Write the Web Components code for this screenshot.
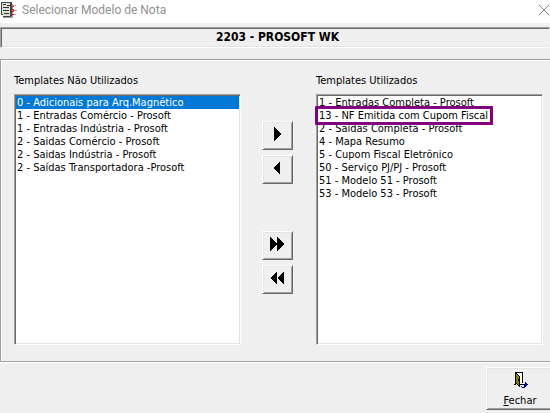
<!DOCTYPE html>
<html lang="pt-BR">
<head>
<meta charset="utf-8">
<meta name="viewport" content="width=device-width, initial-scale=1">
<title>Selecionar Modelo de Nota</title>
<style>
    body {
        margin: 0;
        background: #efefef;
        overflow: hidden;
    }
</style>
</head>
<body>
<model-dialog></model-dialog>

<script>
class TitleBar extends HTMLElement {
    constructor() {
        super();
        this.attachShadow({ mode: 'open' });
    }

    connectedCallback() {
        this.shadowRoot.innerHTML = `
            <style>
                :host {
                    display: flex;
                    align-items: center;
                    gap: 5px;
                    height: 23px;
                    padding-left: 1px;
                    background: #fff;
                    color: #909090;
                    font: 12px/20px Roboto, "Noto Sans", sans-serif;
                }

                .icon {
                    flex: none;
                    align-self: flex-start;
                    margin-top: 2px;
                }

                .title {
                    flex: 1;
                    align-self: flex-start;
                    white-space: nowrap;
                }

                button {
                    align-self: flex-start;
                    display: flex;
                    margin: 5px 1px 0 0;
                    padding: 0;
                    border: 0;
                    background: none;
                    color: inherit;
                }
            </style>

            <svg class="icon" width="16" height="16" viewBox="0 0 16 16" shape-rendering="crispEdges" aria-hidden="true">
                <path fill="#999" d="M2 14h10v2H2zM10 2h2v13h-2z"/>
                <path fill="#444" d="M0 0h10v1H0zM0 0h1v13H0zM9 0h2v14H9zM0 12h2v1H0zM2 14h8v1H2z"/>
                <path fill="#ddd" d="M1 1h8v13H2V12H1z"/>
                <path fill="#333" d="M2 2h3v1H2zM6 3h3v1H6zM2 5h6v1H2zM2 8h2v1H2zM4 8h4v1H4zM3 11h5v1H3z"/>
                <path fill="#eee84c" d="M4 3h2v1H4zM2 12h2v1H2zM6 9h2v1H6z"/>
                <path fill="#ff8a80" d="M12 3h3v1h-3zM12 8h4v1h-4zM12 12h3v1h-3z"/>
                <path fill="#e53935" d="M11 4h2v1h-2zM11 7h2v3h-2zM11 12h2v1h-2z"/>
            </svg>
            <span class="title"><slot></slot></span>
            <button type="button" aria-label="Fechar janela">
                <svg width="10" height="10" viewBox="0 0 10 10" aria-hidden="true">
                    <path d="M0 0l10 10M10 0L0 10" fill="none" stroke="#888"/>
                </svg>
            </button>
        `;
    }
}

class TemplateList extends HTMLElement {
    constructor() {
        super();
        this.attachShadow({ mode: 'open' });
    }

    connectedCallback() {
        const items = [...this.querySelectorAll('li')];
        const options = items
            .map(li => `<option${li.hasAttribute('selected') ? ' selected' : ''}>${li.textContent}</option>`)
            .join('');

        this.shadowRoot.innerHTML = `
            <style>
                :host {
                    display: block;
                    min-width: 0;
                }

                label {
                    display: block;
                    margin-bottom: 6px;
                    line-height: 14px;
                    white-space: nowrap;
                }

                .box {
                    position: relative;
                }

                select {
                    display: block;
                    box-sizing: border-box;
                    width: 100%;
                    margin: 0;
                    padding: 1px;
                    border: 1px solid;
                    border-color: #a0a0a0 #fff #fff #a0a0a0;
                    border-radius: 0;
                    outline: 0;
                    background: #fff;
                    box-shadow: inset 1px 1px #696969, inset -1px -1px #e3e3e3;
                    color: #000;
                    font: inherit;
                    overflow: hidden;
                    scrollbar-width: none;
                }

                option {
                    min-height: 13px;
                    height: 13px;
                    padding: 0 1px;
                    line-height: 13px;
                    white-space: pre;
                }

                option:checked {
                    background: #0078d7 linear-gradient(#0078d7, #0078d7);
                    color: #fff;
                    -webkit-text-fill-color: #fff;
                }

                ::slotted([slot="mark"]) {
                    position: absolute;
                    top: 12px;
                    left: -1px;
                    box-sizing: border-box;
                    width: 178px;
                    height: 19px;
                    border: 3px solid #800080;
                    border-radius: 1px;
                    pointer-events: none;
                }
            </style>

            <label for="list">${this.getAttribute('label')}</label>
            <div class="box">
                <select id="list" size="19">${options}</select>
                <slot name="mark"></slot>
            </div>
        `;
    }
}

class MoveButton extends HTMLElement {
    constructor() {
        super();
        this.attachShadow({ mode: 'open' });
    }

    connectedCallback() {
        const shapes = {
            right: 'M11 5v14l7-7z',
            left: 'M17 5v14l-7-7z',
            'all-right': 'M7 5v14l7-7zM14 5v14l7-7z',
            'all-left': 'M14 5v14l-7-7zM21 5v14l-7-7z'
        };

        this.shadowRoot.innerHTML = `
            <style>
                :host {
                    display: block;
                }

                button {
                    display: block;
                    box-sizing: border-box;
                    width: 31px;
                    height: 29px;
                    margin: 0;
                    padding: 0;
                    border: 1px solid;
                    border-color: #fff #696969 #696969 #fff;
                    border-radius: 0;
                    background: #efefef;
                    box-shadow: inset 1px 1px #e3e3e3, inset -1px -1px #a0a0a0;
                }

                svg {
                    display: block;
                }
            </style>

            <button type="button" aria-label="${this.getAttribute('label')}">
                <svg width="29" height="27" viewBox="0 0 29 27" shape-rendering="crispEdges" aria-hidden="true">
                    <path d="${shapes[this.getAttribute('direction')]}"/>
                </svg>
            </button>
        `;
    }
}

class CloseButton extends HTMLElement {
    constructor() {
        super();
        this.attachShadow({ mode: 'open' });
    }

    connectedCallback() {
        this.shadowRoot.innerHTML = `
            <style>
                :host {
                    display: block;
                }

                button {
                    display: flex;
                    flex-direction: column;
                    align-items: center;
                    gap: 4px;
                    box-sizing: border-box;
                    width: 68px;
                    height: 43px;
                    margin: 0;
                    padding: 4px 0 0;
                    border: 1px solid;
                    border-color: #fff #696969 #696969 #fff;
                    border-radius: 0;
                    background: #efefef;
                    box-shadow: inset 1px 1px #e3e3e3, inset -1px -1px #a0a0a0;
                    color: #000;
                    font: inherit;
                    line-height: 15px;
                }
            </style>

            <button type="button">
                <svg width="16" height="17" viewBox="0 0 16 17" shape-rendering="crispEdges" aria-hidden="true">
                    <path fill="#000" d="M3 0h8v11h-1V1H4v11H3zM2 12h2v1H2zM8 12h4v1H8z"/>
                    <path fill="#fff" d="M5 1h5v11H8V4H7V3H6V2H5z"/>
                    <path fill="#000" d="M4 1h1v1h1v1h1v1h1v11H7v-1H6v-1H5v-1H4z"/>
                    <path fill="#808000" d="M4 2h1v1h1v1h1v9H6v-1H5v-1H4z"/>
                    <path fill="#000" d="M6 7h1v2H6z"/>
                    <path fill="#000080" d="M13 10h1v1h1v1h1v1h-1v1h-1v1h-1v1h-3v-1h2v-2h-1v-1h2zM9 14h1v1H9z"/>
                </svg>
                <span><slot></slot></span>
            </button>
        `;
    }
}

class ModelDialog extends HTMLElement {
    constructor() {
        super();
        this.attachShadow({ mode: 'open' });
    }

    connectedCallback() {
        this.shadowRoot.innerHTML = `
            <style>
                :host {
                    display: block;
                    color: #000;
                    font: 11px/13px "DejaVu Sans Condensed", "DejaVu Sans", sans-serif;
                }

                h1 {
                    margin: 4px 0 0;
                    padding-left: 5px;
                    border: 1px solid;
                    border-color: #a0a0a0 transparent #fff #a0a0a0;
                    box-shadow: inset 1px 1px #696969, inset 0 -1px #e3e3e3;
                    font-size: 12px;
                    line-height: 19px;
                    text-align: center;
                }

                .panel {
                    display: grid;
                    grid-template-columns: 1fr 75px 1fr;
                    margin-top: 11px;
                    padding: 14px 7px 16px 13px;
                    border: 1px solid #a0a0a0;
                    border-right: 0;
                    box-shadow: inset 1px 1px #fff, 0 1px #fff;
                }

                .moves {
                    display: grid;
                    align-content: start;
                    justify-content: start;
                    gap: 5px;
                    padding: 47px 0 0 21px;
                }

                .all {
                    margin-top: 42px;
                }

                footer {
                    display: flex;
                    justify-content: flex-end;
                    margin: 5px -4px 0 0;
                }
            </style>

            <title-bar>Selecionar Modelo de Nota</title-bar>
            <h1>2203 - PROSOFT WK</h1>
            <div class="panel">
                <template-list label="Templates Não Utilizados">
                    <li selected>0 - Adicionais para Arq.Magnético</li>
                    <li>1 - Entradas Comércio - Prosoft</li>
                    <li>1 - Entradas Indústria - Prosoft</li>
                    <li>2 - Saidas Comércio - Prosoft</li>
                    <li>2 - Saidas Indústria - Prosoft</li>
                    <li>2 - Saídas Transportadora -Prosoft</li>
                </template-list>
                <div class="moves">
                    <move-button direction="right" label="Adicionar"></move-button>
                    <move-button direction="left" label="Remover"></move-button>
                    <move-button class="all" direction="all-right" label="Adicionar todos"></move-button>
                    <move-button direction="all-left" label="Remover todos"></move-button>
                </div>
                <template-list label="Templates Utilizados">
                    <li>1 - Entradas Completa - Prosoft</li>
                    <li>13 - NF Emitida com Cupom Fiscal</li>
                    <li>2 - Saidas Completa - Prosoft</li>
                    <li>4 - Mapa Resumo</li>
                    <li>5 - Cupom Fiscal Eletrônico</li>
                    <li>50 - Serviço PJ/PJ - Prosoft</li>
                    <li>51 - Modelo 51 - Prosoft</li>
                    <li>53 - Modelo 53 - Prosoft</li>
                    <div slot="mark"></div>
                </template-list>
            </div>
            <footer>
                <close-button><u>F</u>echar</close-button>
            </footer>
        `;
    }
}

customElements.define('title-bar', TitleBar);
customElements.define('template-list', TemplateList);
customElements.define('move-button', MoveButton);
customElements.define('close-button', CloseButton);
customElements.define('model-dialog', ModelDialog);
</script>
</body>
</html>
